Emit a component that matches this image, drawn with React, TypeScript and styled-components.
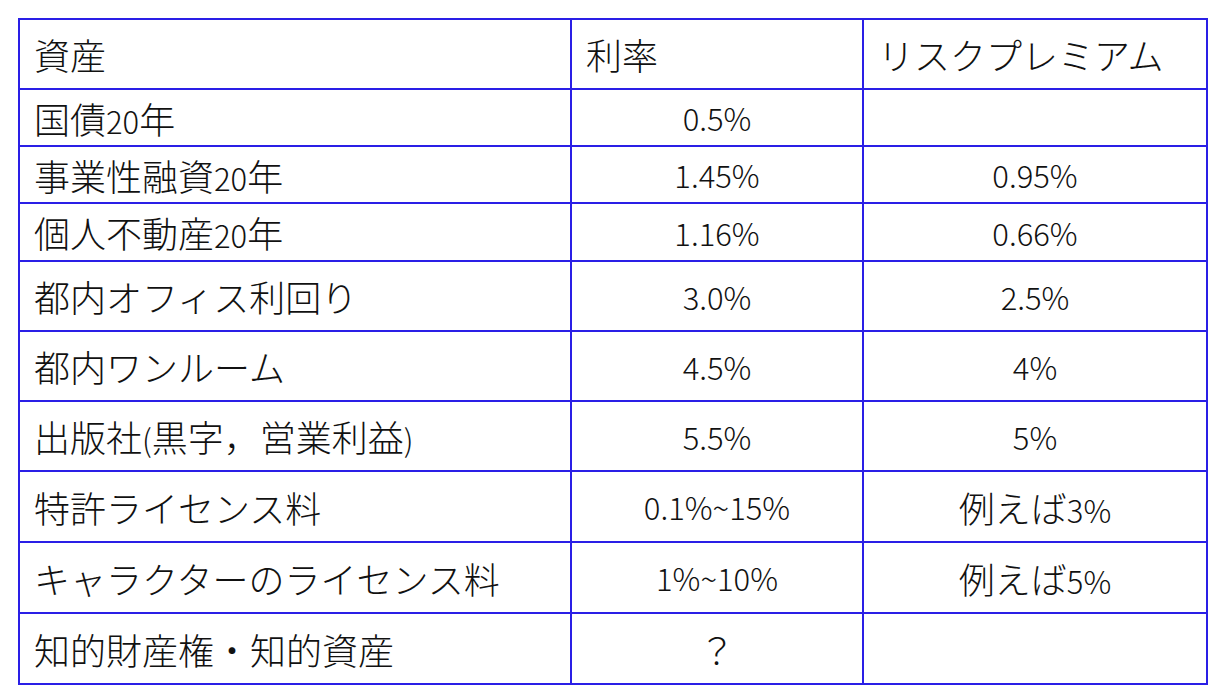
import React from "react";
import styled, { createGlobalStyle } from "styled-components";

const GlobalStyle = createGlobalStyle`
  html, body {
    margin: 0;
    padding: 0;
    background: #ffffff;
  }
  body {
    padding: 18px 0 0 18px;
    font-family: "Noto Sans CJK JP", "Noto Sans", sans-serif;
    color: #111111;
  }
`;

const BORDER = "#2a1fe6";

const Table = styled.div`
  display: grid;
  grid-template-columns: 552px 292px 344px;
  width: max-content;
  border-top: 2px solid ${BORDER};
  border-left: 2px solid ${BORDER};
`;

const Cell = styled.div<{ $h: number; $center?: boolean }>`
  box-sizing: border-box;
  height: ${(p) => p.$h}px;
  border-right: 2px solid ${BORDER};
  border-bottom: 2px solid ${BORDER};
  display: flex;
  align-items: center;
  justify-content: ${(p) => (p.$center ? "center" : "flex-start")};
  padding: 0 14px;
  font-size: 36px;
  font-weight: 300;
  line-height: 1;
  white-space: nowrap;
`;

// digits and ascii in the picture are set a bit smaller than the kanji
const Latin = styled.span`
  font-size: 31px;
`;

const isLatin = (s: string) => /^[\x20-\x7e]+$/.test(s);

const Text = ({ value }: { value: string }) => {
  if (value === "") return null;
  if (isLatin(value)) return <Latin>{value}</Latin>;
  const parts = value.split(/([\x20-\x7e]+)/).filter((s) => s !== "");
  return (
    <span>
      {parts.map((p, i) =>
        isLatin(p) ? <Latin key={i}>{p}</Latin> : <React.Fragment key={i}>{p}</React.Fragment>
      )}
    </span>
  );
};

const rows: { h: number; asset: string; rate: string; premium: string }[] = [
  { h: 57, asset: "国債20年", rate: "0.5%", premium: "" },
  { h: 57, asset: "事業性融資20年", rate: "1.45%", premium: "0.95%" },
  { h: 58, asset: "個人不動産20年", rate: "1.16%", premium: "0.66%" },
  { h: 70, asset: "都内オフィス利回り", rate: "3.0%", premium: "2.5%" },
  { h: 70, asset: "都内ワンルーム", rate: "4.5%", premium: "4%" },
  { h: 70, asset: "出版社(黒字，営業利益)", rate: "5.5%", premium: "5%" },
  { h: 71, asset: "特許ライセンス料", rate: "0.1%~15%", premium: "例えば3%" },
  { h: 71, asset: "キャラクターのライセンス料", rate: "1%~10%", premium: "例えば5%" },
  { h: 71, asset: "知的財産権・知的資産", rate: "？", premium: "" },
];

export default function App() {
  return (
    <>
      <GlobalStyle />
      <Table>
        <Cell $h={70}>資産</Cell>
        <Cell $h={70}>利率</Cell>
        <Cell $h={70}>リスクプレミアム</Cell>
        {rows.map((r) => (
          <React.Fragment key={r.asset}>
            <Cell $h={r.h}>
              <Text value={r.asset} />
            </Cell>
            <Cell $h={r.h} $center>
              <Text value={r.rate} />
            </Cell>
            <Cell $h={r.h} $center>
              <Text value={r.premium} />
            </Cell>
          </React.Fragment>
        ))}
      </Table>
    </>
  );
}
